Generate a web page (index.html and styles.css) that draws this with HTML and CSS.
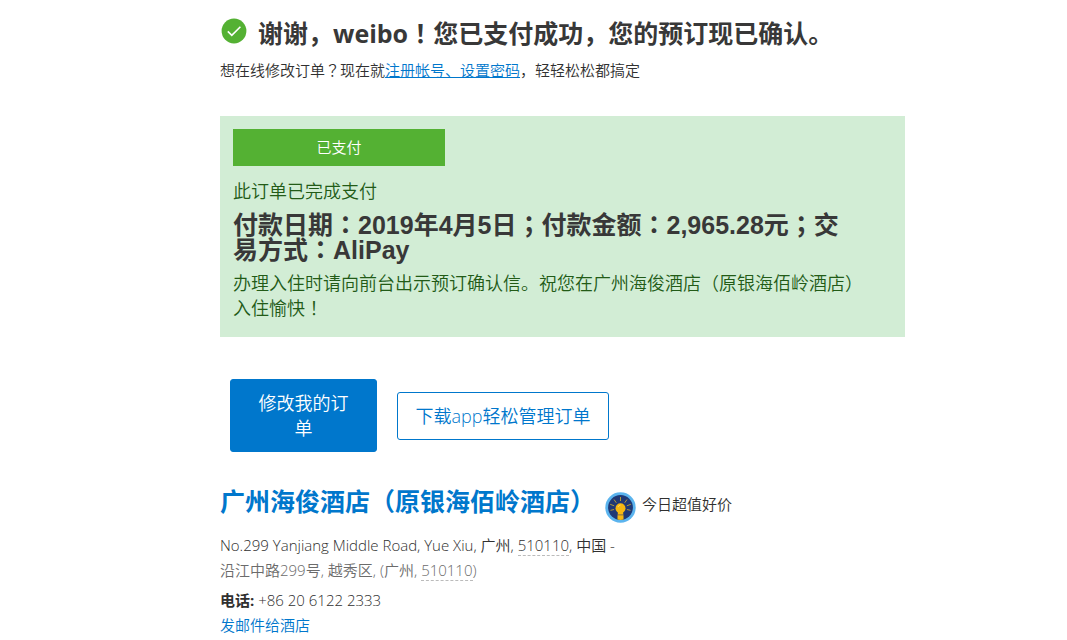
FILE: index.html
```
<!DOCTYPE html>
<html lang="zh-CN">
<head>
<meta charset="utf-8">
<meta name="viewport" content="width=device-width, initial-scale=1">
<title>预订确认</title>
<link rel="stylesheet" href="styles.css">
</head>
<body>
<main class="page">
  <header class="thanks">
    <div class="thanks-row">
      <svg class="check" viewBox="0 0 26 26" aria-hidden="true">
        <circle cx="13" cy="13" r="12.4" fill="#54b133"/>
        <path d="M6.8 13.4l4 3.9 8.6-8.6" fill="none" stroke="#fff" stroke-width="1.6"/>
      </svg>
      <h1 class="title">谢谢，weibo<span lang="zh-Hant">！</span>您已支付成功，您的预订现已确认。</h1>
    </div>
    <p class="hint">想在线修改订单<span lang="zh-Hant">？</span>现在就<a class="hint-link" href="#">注册帐号、设置密码</a>，轻轻松松都搞定</p>
  </header>

  <section class="payment">
    <div class="badge">已支付</div>
    <p class="payment-text">此订单已完成支付</p>
    <h2 class="payment-detail">付款日期<span lang="zh-Hant">：</span>2019年4月5日<span lang="zh-Hant">；</span>付款金额<span lang="zh-Hant">：</span>2,965.28元<span lang="zh-Hant">；</span>交易方式<span lang="zh-Hant">：</span>AliPay</h2>
    <p class="payment-text">办理入住时请向前台出示预订确认信。祝您在广州海俊酒店（原银海佰岭酒店）入住愉快<span lang="zh-Hant">！</span></p>
  </section>

  <div class="actions">
    <button class="btn btn-primary" type="button">修改我的订单</button>
    <button class="btn btn-outline" type="button">下载app轻松管理订单</button>
  </div>

  <section class="hotel">
    <div class="hotel-head">
      <h2 class="hotel-title"><a class="link" href="#">广州海俊酒店（原银海佰岭酒店）</a></h2>
      <div class="deal">
        <svg class="deal-icon" viewBox="0 0 31 31" aria-hidden="true">
          <circle cx="15.5" cy="15.5" r="15.2" fill="#5bb4ee"/>
          <circle cx="15.5" cy="15.5" r="12.4" fill="#203875"/>
          <path d="M15.5 5v4M9 7.5l2.3 3.3M22 7.5l-2.3 3.3M5.2 12.3l4 1.5M25.8 12.3l-4 1.5M5.5 18.3l3.6-.8M25.5 18.3l-3.6-.8" stroke="#b29a38" stroke-width="1" fill="none"/>
          <circle cx="15.5" cy="16.2" r="5" fill="#f6b711"/>
          <path d="M12.8 19.5h5.4v3h-5.4zM12.5 24h6v3.6q-3 .8-6 0z" fill="#f6b711"/>
          <path d="M12.5 22.5h6V24h-6z" fill="#c69b2a"/>
          <path d="M13 15q.8-2 2.6-2" stroke="#fbd65c" stroke-width="1" fill="none"/>
        </svg>
        <span class="deal-text">今日超值好价</span>
      </div>
    </div>
    <address class="address">
      <p class="line">No.299 Yanjiang Middle Road, Yue Xiu, 广州, <span class="zip">510110</span>, 中国 -</p>
      <p class="line line-muted">沿江中路299号, 越秀区, (广州, <span class="zip">510110</span>)</p>
      <p class="line line-phone"><strong>电话:</strong> +86 20 6122 2333</p>
      <p class="line"><a class="link" href="#">发邮件给酒店</a></p>
    </address>
  </section>
</main>
</body>
</html>
```
FILE: styles.css
```
* {
  box-sizing: border-box;
}

body {
  margin: 0;
  background: #fff;
  color: #303030;
  font-family: "Open Sans", "Noto Sans CJK SC", sans-serif;
  font-size: 15px;
  font-weight: 350;
  line-height: 25px;
}

/* Centred punctuation comes from the traditional forms */
[lang="zh-Hant"] {
  font-family: "Open Sans", "Noto Sans CJK TC", sans-serif;
}

.payment-detail [lang="zh-Hant"] {
  font-family: "Liberation Sans", "Noto Sans CJK TC", sans-serif;
}

h1, h2, p {
  margin: 0;
}

.page {
  max-width: 905px;
  padding: 17px 0 0 220px;
}

.link,
.hint-link {
  color: #0077cc;
}

.link {
  text-decoration: none;
}

.thanks-row {
  display: flex;
  align-items: flex-start;
  gap: 11px;
  padding-left: 1px;
}

.check {
  flex: none;
  width: 26px;
  height: 26px;
  margin-top: 1px;
}

.title {
  color: #383838;
  font-size: 25px;
  font-weight: 700;
  line-height: 32px;
}

.hint {
  margin-top: 9px;
}

.payment {
  margin-top: 33px;
  padding: 13px 40px 16px 13px;
  background: #d2edd5;
}

.badge {
  width: 212px;
  padding: 6px;
  background: #54b133;
  color: #fff;
  text-align: center;
}

.payment-text {
  max-width: 632px;
  margin-top: 13px;
  color: #225b17;
  font-size: 18px;
}

.payment-detail {
  max-width: 630px;
  margin-top: 9px;
  color: #383838;
  font-family: "Liberation Sans", "Noto Sans CJK SC", sans-serif;
  font-size: 25px;
  font-weight: 700;
  line-height: 25px;
}

.payment-detail + .payment-text {
  margin-top: 8px;
}

.actions {
  display: flex;
  align-items: center;
  gap: 20px;
  margin-top: 42px;
  padding-left: 10px;
}

.btn {
  border: 1px solid #0077cc;
  border-radius: 3px;
  font-family: inherit;
  font-size: 18px;
  font-weight: inherit;
  line-height: 25px;
  cursor: pointer;
}

.btn-primary {
  width: 147px;
  padding: 11px 26px 10px;
  background: #0077cc;
  color: #fff;
}

.btn-outline {
  width: 212px;
  padding: 11px 8px 10px;
  background: #fff;
  color: #0077cc;
}

.hotel {
  margin-top: 33px;
}

.hotel-head {
  display: flex;
  align-items: flex-start;
  gap: 10px;
}

.hotel-title {
  font-size: 25px;
  font-weight: 700;
  line-height: 32px;
}

.deal {
  display: flex;
  align-items: flex-start;
  gap: 6px;
  padding-top: 7px;
}

.deal-icon {
  width: 31px;
  height: 31px;
}

.address {
  margin-top: 10px;
  font-style: normal;
}

.line-muted {
  color: #6b6b6b;
}

.line-phone {
  margin-top: 5px;
}

.zip {
  border-bottom: 1px dashed #bbb;
}
```
